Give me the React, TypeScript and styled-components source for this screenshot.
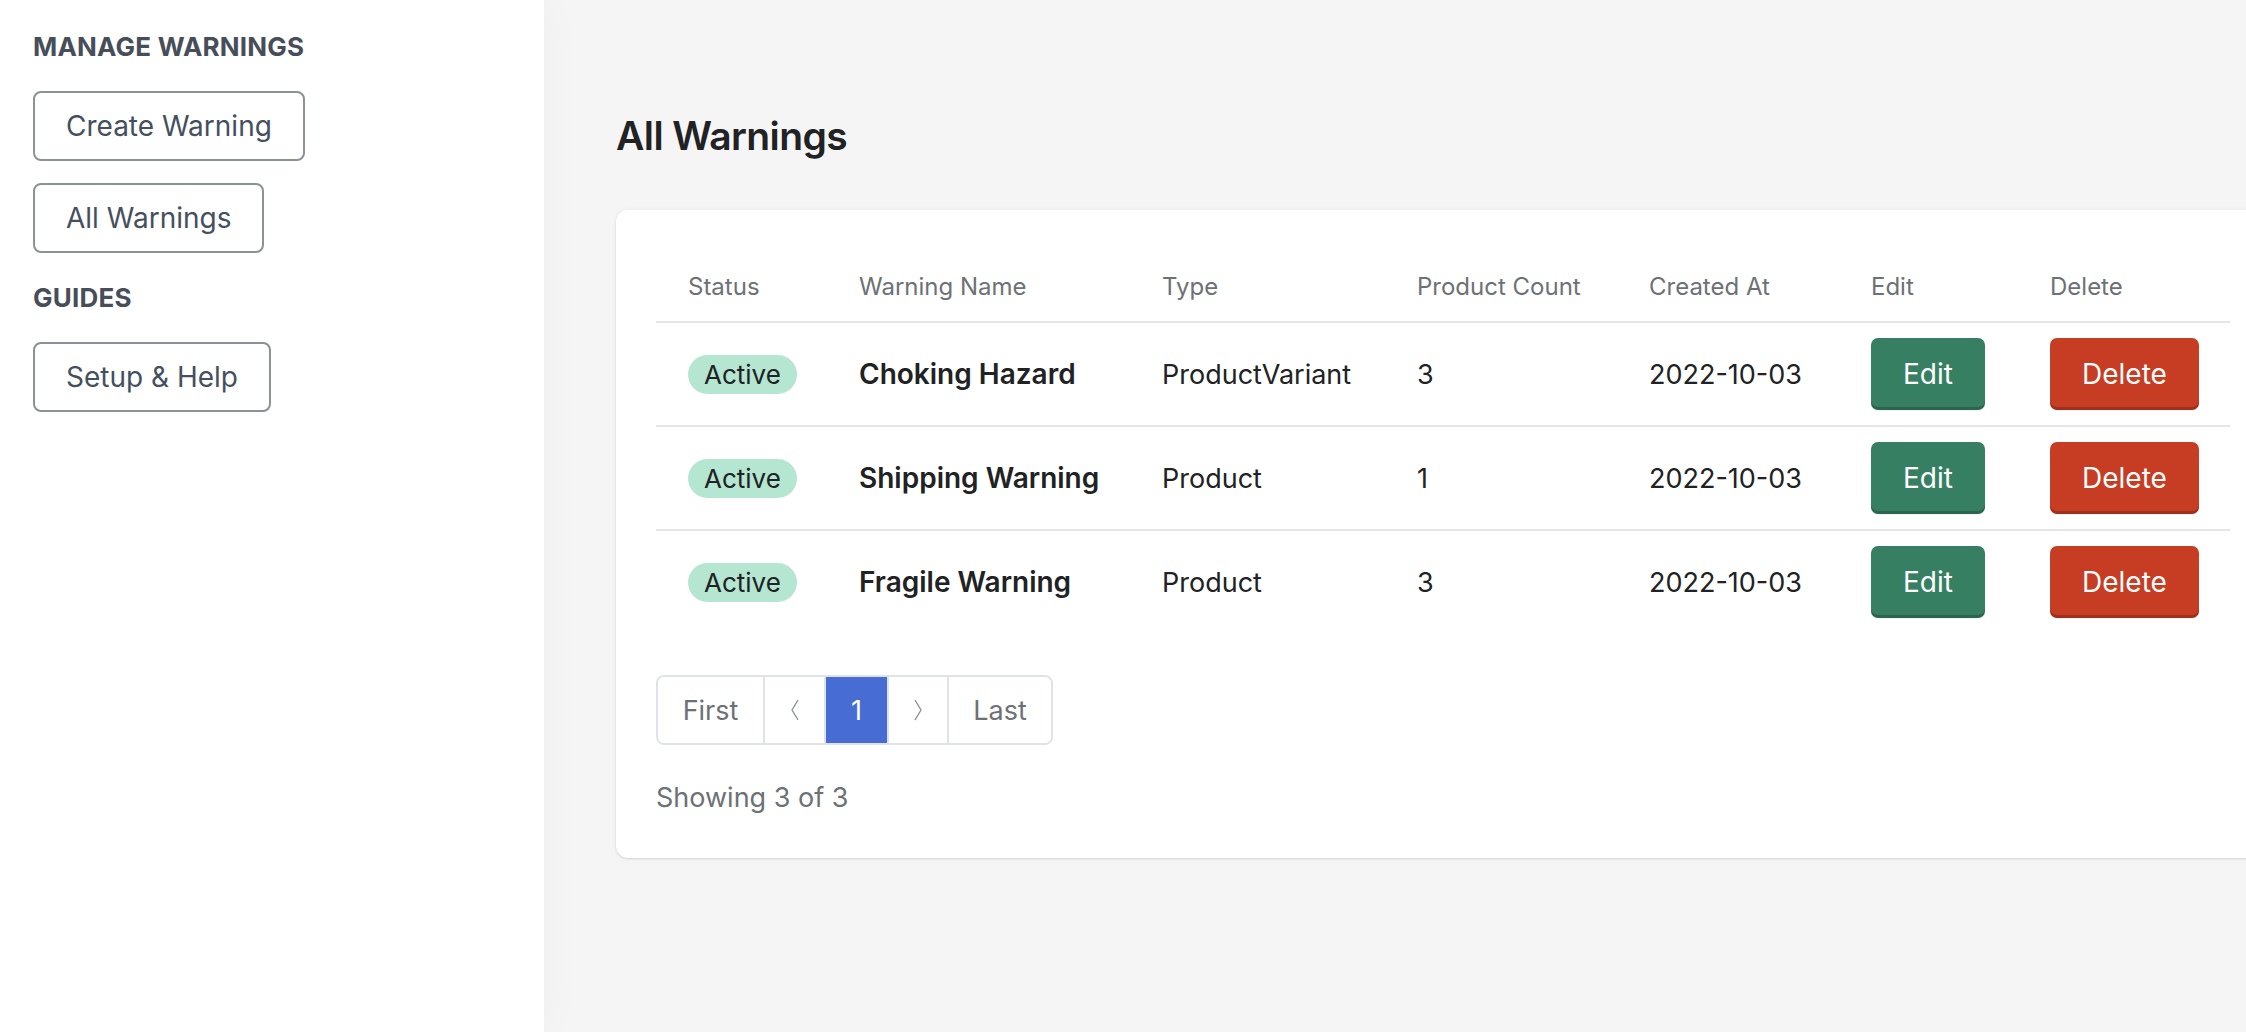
import React from 'react';
import styled, { createGlobalStyle } from 'styled-components';

const GlobalStyle = createGlobalStyle`
  html, body {
    margin: 0;
    padding: 0;
    height: 100%;
  }

  body {
    font-family: Inter, 'Noto Sans', 'Liberation Sans', sans-serif;
    color: #202223;
    background: #f4f4f4;
    -webkit-font-smoothing: antialiased;
  }
`;

const Layout = styled.div`
  display: flex;
  width: 100vw;
  height: 100vh;
  overflow: hidden;
`;

const Sidebar = styled.nav`
  position: relative;
  z-index: 1;
  display: flex;
  flex: 0 0 544px;
  flex-direction: column;
  gap: 29px;
  box-sizing: border-box;
  padding: 31px 0 0 33px;
  background: #ffffff;
  box-shadow: 2px 0 40px rgba(0, 0, 0, 0.03);
`;

const NavSection = styled.div`
  display: flex;
  flex-direction: column;
  align-items: flex-start;
  gap: 22px;
`;

const SectionTitle = styled.h2`
  margin: 0 0 6px;
  font-size: 26px;
  font-weight: 700;
  line-height: 32px;
  letter-spacing: 0.2px;
  text-transform: uppercase;
  color: #474e5a;
`;

const NavButton = styled.button`
  height: 70px;
  box-sizing: border-box;
  padding: 0 31px;
  border: 2px solid #8c9196;
  border-radius: 8px;
  background: #ffffff;
  font-family: inherit;
  font-size: 28px;
  color: #454f5e;
  cursor: pointer;
`;

const Main = styled.main`
  flex: 1;
  min-width: 0;
  box-sizing: border-box;
  padding: 112px 0 0 72px;
  overflow: hidden;
  background: #f5f5f5;
`;

const PageTitle = styled.h1`
  margin: 0 0 50px;
  font-size: 39px;
  font-weight: 600;
  line-height: 48px;
  letter-spacing: -0.6px;
  color: #202223;
`;

const Card = styled.section`
  width: 1654px;
  box-sizing: border-box;
  padding: 41px 40px 42px;
  border-radius: 12px;
  background: #ffffff;
  box-shadow: 0 0 5px rgba(23, 24, 24, 0.05), 0 1px 2px rgba(0, 0, 0, 0.12);
`;

const Grid = styled.div`
  display: grid;
  grid-template-columns: 171px 303px 255px 232px 222px 179px 212px;
`;

const Row = styled.div<{ $header?: boolean; $last?: boolean }>`
  display: contents;

  & > * {
    height: ${({ $header }) => ($header ? '70px' : '102px')};
    border-bottom: ${({ $last }) => ($last ? '2px solid transparent' : '2px solid #e4e5e7')};
  }
`;

const HeadCell = styled.div`
  display: flex;
  align-items: center;
  padding: 0 32px;
  font-size: 24px;
  color: #6d7175;
  white-space: nowrap;
`;

const Cell = styled.div<{ $bold?: boolean }>`
  display: flex;
  align-items: center;
  padding: 0 32px;
  font-size: ${({ $bold }) => ($bold ? '28px' : '27px')};
  font-weight: ${({ $bold }) => ($bold ? 600 : 400)};
  color: #202223;
  white-space: nowrap;
`;

const Badge = styled.span`
  display: inline-flex;
  align-items: center;
  height: 39px;
  padding: 0 16px;
  border-radius: 20px;
  background: #b5e6d2;
  font-size: 26px;
  color: #202223;
`;

const ActionButton = styled.button<{ $tone: 'edit' | 'delete' }>`
  height: 72px;
  padding: 0 32px;
  border: none;
  border-radius: 7px;
  background: ${({ $tone }) => ($tone === 'edit' ? '#377f62' : '#c63d23')};
  box-shadow: inset 0 -3px 0 rgba(0, 0, 0, 0.2), 0 1px 0 rgba(0, 0, 0, 0.05);
  font-family: inherit;
  font-size: 28px;
  color: #ffffff;
  cursor: pointer;
`;

const Pagination = styled.div`
  display: inline-flex;
  margin-top: 40px;
  height: 70px;
  border: 2px solid #dfe3e8;
  border-radius: 8px;
  box-sizing: border-box;
  overflow: hidden;
`;

const PageItem = styled.button<{ $width: number; $active?: boolean }>`
  display: flex;
  align-items: center;
  justify-content: center;
  width: ${({ $width }) => $width}px;
  height: 100%;
  padding: 0;
  border: none;
  border-left: 2px solid #dfe3e8;
  background: ${({ $active }) => ($active ? '#476dd4' : '#ffffff')};
  font-family: inherit;
  font-size: 27px;
  color: ${({ $active }) => ($active ? '#ffffff' : '#6d7175')};

  &:first-child {
    border-left: none;
  }
`;

const Summary = styled.p`
  margin: 35px 0 0;
  font-size: 27px;
  line-height: 36px;
  color: #6d7175;
`;

const Chevron: React.FC<{ dir: 'left' | 'right' }> = ({ dir }) => (
  <svg width="10" height="24" viewBox="0 0 10 24" fill="none">
    <polyline
      points={dir === 'left' ? '8,2 2,12 8,22' : '2,2 8,12 2,22'}
      stroke="#8c9196"
      strokeWidth="1.4"
      strokeLinejoin="round"
    />
  </svg>
);

interface Warning {
  name: string;
  type: string;
  count: number;
  createdAt: string;
}

const warnings: Warning[] = [
  { name: 'Choking Hazard', type: 'ProductVariant', count: 3, createdAt: '2022-10-03' },
  { name: 'Shipping Warning', type: 'Product', count: 1, createdAt: '2022-10-03' },
  { name: 'Fragile Warning', type: 'Product', count: 3, createdAt: '2022-10-03' },
];

const columns = ['Status', 'Warning Name', 'Type', 'Product Count', 'Created At', 'Edit', 'Delete'];

const App: React.FC = () => (
  <>
    <GlobalStyle />
    <Layout>
      <Sidebar>
        <NavSection>
          <SectionTitle>Manage Warnings</SectionTitle>
          <NavButton>Create Warning</NavButton>
          <NavButton>All Warnings</NavButton>
        </NavSection>
        <NavSection>
          <SectionTitle>Guides</SectionTitle>
          <NavButton>Setup &amp; Help</NavButton>
        </NavSection>
      </Sidebar>

      <Main>
        <PageTitle>All Warnings</PageTitle>
        <Card>
          <Grid>
            <Row $header>
              {columns.map((col) => (
                <HeadCell key={col}>{col}</HeadCell>
              ))}
            </Row>
            {warnings.map((w, i) => (
              <Row key={w.name} $last={i === warnings.length - 1}>
                <Cell><Badge>Active</Badge></Cell>
                <Cell $bold>{w.name}</Cell>
                <Cell>{w.type}</Cell>
                <Cell>{w.count}</Cell>
                <Cell>{w.createdAt}</Cell>
                <Cell><ActionButton $tone="edit">Edit</ActionButton></Cell>
                <Cell><ActionButton $tone="delete">Delete</ActionButton></Cell>
              </Row>
            ))}
          </Grid>

          <Pagination>
            <PageItem $width={105}>First</PageItem>
            <PageItem $width={61}><Chevron dir="left" /></PageItem>
            <PageItem $width={63} $active>1</PageItem>
            <PageItem $width={60}><Chevron dir="right" /></PageItem>
            <PageItem $width={104}>Last</PageItem>
          </Pagination>

          <Summary>Showing 3 of 3</Summary>
        </Card>
      </Main>
    </Layout>
  </>
);

export default App;
